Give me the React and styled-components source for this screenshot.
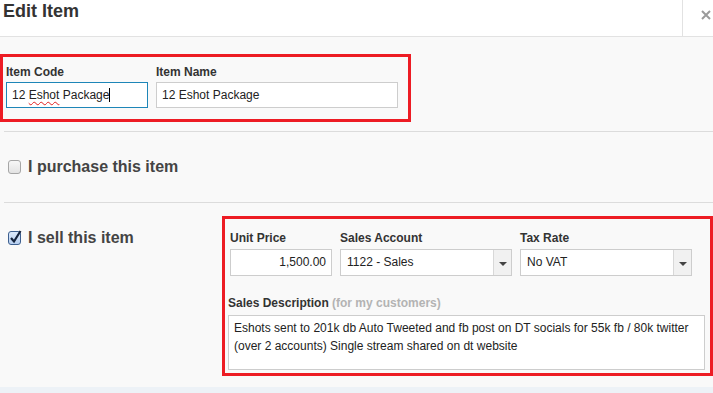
import styled, { createGlobalStyle } from "styled-components";

const GlobalStyle = createGlobalStyle`
  html, body {
    margin: 0;
    padding: 0;
    background: #f9f9f9;
    font-family: "Liberation Sans", Arial, sans-serif;
    color: #333;
  }
  * {
    box-sizing: border-box;
  }
`;

const Page = styled.div`
  width: 713px;
  height: 393px;
  overflow: hidden;
  display: flex;
  flex-direction: column;
`;

const Header = styled.header`
  display: flex;
  height: 37px;
  background: #fff;
  border-bottom: 1px solid #e2e2e2;
`;

const Title = styled.h1`
  margin: 0;
  padding: 1px 0 0 3px;
  font-size: 18px;
  line-height: 20px;
  font-weight: bold;
  color: #333;
`;

const Close = styled.div`
  margin-left: auto;
  width: 31px;
  border-left: 1px solid #e2e2e2;
  padding: 6px 0 0 18px;
`;

const Body = styled.div`
  flex: 1;
  display: flex;
  flex-direction: column;
  padding-top: 17px;
`;

const Highlight = styled.div`
  border: 3px solid #ed1c24;
  width: ${(p) => p.$width || "auto"};
  flex: ${(p) => (p.$grow ? 1 : "none")};
  padding: ${(p) => p.$pad};
`;

const FieldRow = styled.div`
  display: flex;
  gap: 8px;
  margin-left: ${(p) => p.$indent || 0}px;
`;

const Field = styled.div`
  display: flex;
  flex-direction: column;
  width: ${(p) => p.$w}px;
  margin-top: ${(p) => p.$top || 0}px;
`;

const Label = styled.label`
  font-size: 12px;
  line-height: 14px;
  font-weight: bold;
  color: #333;
  margin-bottom: ${(p) => p.$gap || 3}px;
`;

const Hint = styled.span`
  color: #b3b3b3;
`;

const Input = styled.div`
  height: ${(p) => p.$h || 26}px;
  background: #fff;
  border: 1px solid ${(p) => (p.$focus ? "#1e86b8" : "#cdcdcd")};
  font-size: 12px;
  line-height: ${(p) => (p.$h || 26) - 2}px;
  padding: 0 5px;
  text-align: ${(p) => (p.$right ? "right" : "left")};
  color: #222;
  white-space: nowrap;
`;

const Spell = styled.span`
  text-decoration: underline wavy #e02020;
  text-decoration-thickness: 1px;
  text-underline-offset: 2px;
`;

const Caret = styled.span`
  display: inline-block;
  width: 1px;
  height: 14px;
  background: #000;
  vertical-align: -3px;
`;

const Select = styled.div`
  display: flex;
  height: 27px;
  background: #fff;
  border: 1px solid #cdcdcd;
  font-size: 12px;
  color: #222;
`;

const SelectValue = styled.div`
  flex: 1;
  line-height: 25px;
  padding-left: 6px;
`;

const SelectButton = styled.div`
  width: 18px;
  background: #f1f1f1;
  border-left: 1px solid #d8d8d8;
  display: flex;
  align-items: center;
  justify-content: center;
`;

const Arrow = styled.span`
  width: 0;
  height: 0;
  border-left: 4px solid transparent;
  border-right: 4px solid transparent;
  border-top: 4px solid #444;
  margin-top: 2px;
`;

const Rule = styled.div`
  height: 1px;
  margin: ${(p) => p.$top || 0}px 0 0 4px;
  background: #dcdcdc;
`;

const CheckRow = styled.div`
  display: flex;
  align-items: center;
  gap: 7px;
  height: ${(p) => (p.$h ? `${p.$h}px` : "auto")};
  padding-left: 8px;
  font-size: 16px;
  font-weight: bold;
  color: #444;
`;

const Box = styled.span`
  position: relative;
  width: 13px;
  height: 14px;
  border-radius: 3px;
  border: 1px solid ${(p) => (p.$checked ? "#3d5f8f" : "#a6a6a6")};
  background: ${(p) =>
    p.$checked
      ? "linear-gradient(#dbe9fb, #b7cff0)"
      : "linear-gradient(#f7f7f7, #e3e3e3)"};
  svg {
    position: absolute;
    left: 0;
    top: -3px;
  }
`;

const SellSection = styled.div`
  display: flex;
  margin-top: 13px;
`;

const SellToggle = styled.div`
  width: 222px;
  padding-top: 13px;
`;

const Description = styled.div`
  height: 55px;
  background: #fff;
  border: 1px solid #cdcdcd;
  padding: 3px 5px;
  font-size: 12px;
  line-height: 18px;
  color: #222;
`;

const Footer = styled.div`
  flex: 1;
  margin-top: 11px;
  background: #edf2f7;
`;

function Checkbox({ checked }) {
  return (
    <Box $checked={checked}>
      {checked && (
        <svg width="13" height="15" viewBox="0 0 13 15">
          <path d="M2 9 L5 12.5 L11.5 2" fill="none" stroke="#14233d" strokeWidth="2.2" />
        </svg>
      )}
    </Box>
  );
}

function Dropdown({ value }) {
  return (
    <Select>
      <SelectValue>{value}</SelectValue>
      <SelectButton>
        <Arrow />
      </SelectButton>
    </Select>
  );
}

export default function App() {
  return (
    <Page>
      <GlobalStyle />
      <Header>
        <Title>Edit Item</Title>
        <Close>
          <svg width="10" height="10" viewBox="0 0 10 10">
            <path d="M1 1 L9 9 M9 1 L1 9" stroke="#9a9a9a" strokeWidth="2" />
          </svg>
        </Close>
      </Header>
      <Body>
        <Highlight $width="411px" $pad="8px 0 11px 3px">
          <FieldRow>
            <Field $w={142}>
              <Label>Item Code</Label>
              <Input $focus>
                12 <Spell>Eshot</Spell> Package
                <Caret />
              </Input>
            </Field>
            <Field $w={242}>
              <Label>Item Name</Label>
              <Input>12 Eshot Package</Input>
            </Field>
          </FieldRow>
        </Highlight>
        <Rule $top={9} />
        <CheckRow $h={70}>
          <Checkbox />
          I purchase this item
        </CheckRow>
        <Rule />
        <SellSection>
          <SellToggle>
            <CheckRow>
              <Checkbox checked />
              I sell this item
            </CheckRow>
          </SellToggle>
          <Highlight $grow $pad="12px 5px 3px 3px">
            <FieldRow $indent={2}>
              <Field $w={102}>
                <Label $gap={4}>Unit Price</Label>
                <Input $h={27} $right>
                  1,500.00
                </Input>
              </Field>
              <Field $w={172}>
                <Label $gap={4}>Sales Account</Label>
                <Dropdown value="1122 - Sales" />
              </Field>
              <Field $w={172}>
                <Label $gap={4}>Tax Rate</Label>
                <Dropdown value="No VAT" />
              </Field>
            </FieldRow>
            <Field $w={477} $top={20}>
              <Label $gap={5}>
                Sales Description <Hint>(for my customers)</Hint>
              </Label>
              <Description>
                Eshots sent to 201k db Auto Tweeted and fb post on DT socials for 55k fb / 80k twitter
                (over 2 accounts) Single stream shared on dt website
              </Description>
            </Field>
          </Highlight>
        </SellSection>
        <Footer />
      </Body>
    </Page>
  );
}
